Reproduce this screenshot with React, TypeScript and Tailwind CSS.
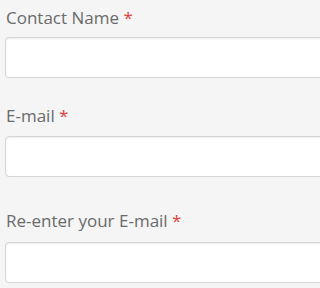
import React from "react";

type FieldProps = {
  label: string;
  labelClass: string;
  gapClass: string;
};

function Field({ label, labelClass, gapClass }: FieldProps) {
  return (
    <div className="flex flex-col">
      <label className={`block text-[17px] leading-[24px] text-[#6a6a6a] ${labelClass}`}>
        {label} <span className="text-[#e2403e]">*</span>
      </label>
      <input
        type="text"
        className={`${gapClass} h-[41px] w-[calc(100%+12px)] rounded-[4px] border border-[#d6d6d6] bg-white shadow-[inset_0_1px_2px_rgba(0,0,0,0.08)] outline-none`}
      />
    </div>
  );
}

export default function App() {
  return (
    <div
      className="h-[288px] w-full overflow-hidden bg-[#f5f5f5] pl-[5px]"
      style={{ fontFamily: '"Open Sans", "Liberation Sans", sans-serif' }}
    >
      <Field label="Contact Name" labelClass="mt-[6px] pl-px" gapClass="mt-[7px]" />
      <Field label="E-mail" labelClass="mt-[26px] pl-px" gapClass="mt-[8px]" />
      <Field label="Re-enter your E-mail" labelClass="mt-[32px] pl-px" gapClass="mt-[9px]" />
    </div>
  );
}
